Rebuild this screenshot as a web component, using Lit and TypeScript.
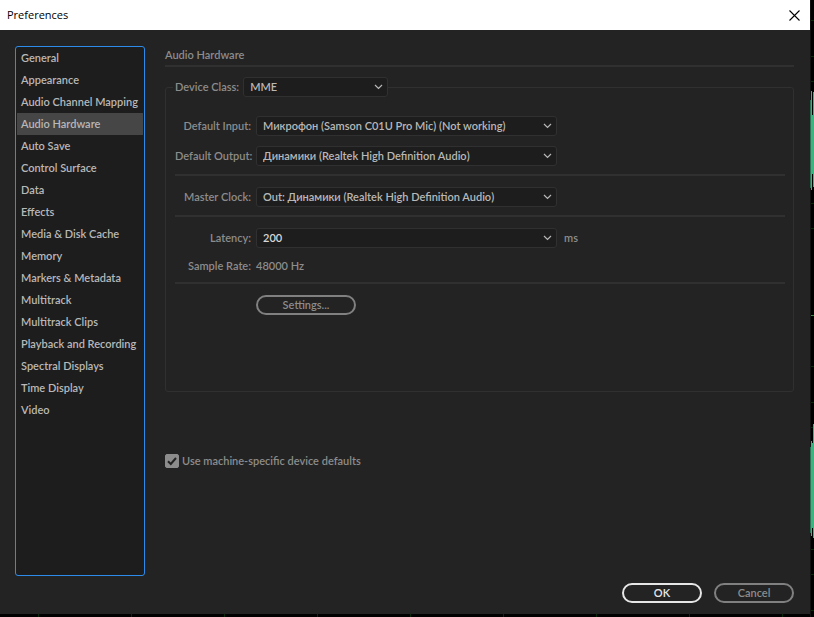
import { LitElement, html, css, svg } from "lit";
import { customElement, property, state } from "lit/decorators.js";
import { classMap } from "lit/directives/class-map.js";

const PAGES = [
  "General", "Appearance", "Audio Channel Mapping", "Audio Hardware", "Auto Save",
  "Control Surface", "Data", "Effects", "Media & Disk Cache", "Memory",
  "Markers & Metadata", "Multitrack", "Multitrack Clips", "Playback and Recording",
  "Spectral Displays", "Time Display", "Video",
];

const chevron = html`<svg class="chevron" width="9" height="6" viewBox="0 0 9 6" aria-hidden="true">
  <path d="M1 1 L4.5 4.5 L8 1" fill="none" stroke="currentColor" stroke-width="1.2" /></svg>`;

/* Slice of the track editor that shows behind the dialog. */
@customElement("editor-edge")
class EditorEdge extends LitElement {
  static styles = css`
    :host { display: block; width: 4px; height: 617px; }
    svg { display: block; }
  `;
  render() {
    const lines = [20, 56, 81, 203, 228, 366, 402, 427, 549, 574, 610];
    return html`<svg width="4" height="617" viewBox="0 0 4 617" aria-hidden="true" shape-rendering="crispEdges">
      ${lines.map((y) => svg`<rect x="0" y=${y} width="4" height="1" fill="#062c0a" />`)}
      <rect x="0" y="315" width="4" height="1" fill="#3f8a45" />
      <g fill="#3cb480">
        <rect x="1" y="91" width="1" height="99" /><rect x="2" y="115" width="1" height="59" /><rect x="3" y="92" width="1" height="95" />
        <rect x="1" y="441" width="1" height="95" /><rect x="2" y="443" width="1" height="85" /><rect x="3" y="424" width="1" height="114" />
      </g>
      <rect x="0" y="0" width="1" height="617" fill="#111" />
      <rect x="0" y="100" width="1" height="88" fill="#2b7355" />
      <rect x="0" y="447" width="1" height="86" fill="#2b7355" />
    </svg>`;
  }
}

@customElement("app-root")
class AppRoot extends LitElement {
  @property() page = "Audio Hardware";
  @state() private machineDefaults = true;

  static styles = css`
    * { box-sizing: border-box; }
    :host {
      display: grid;
      grid-template-columns: 1fr 4px;
      height: 100vh;
      min-height: 480px;
      overflow: hidden;
      background: #000;
      color: #8c8c8c;
      font: 600 11px/16px Lato, "Noto Sans", sans-serif;
    }
    button, input, select { font: inherit; color: inherit; margin: 0; }
    .column { display: flex; flex-direction: column; min-width: 0; }
    .ruler {
      height: 3px;
      background: repeating-linear-gradient(90deg, transparent 0 38px, #062c0a 38px 39px, transparent 39px 93px);
    }
    .dialog { flex: 1; display: flex; flex-direction: column; background: #232323; }
    .titlebar {
      height: 30px;
      padding: 0 10px 0 7px;
      display: flex;
      align-items: center;
      justify-content: space-between;
      background: #fff;
      color: #000;
    }
    .title { margin: 0; font: 400 11px/16px "Open Sans", sans-serif; }
    .close { display: flex; padding: 0; border: 0; background: none; }
    .body { flex: 1; display: flex; gap: 20px; padding: 16px 16px 11px 15px; }
    .pages {
      width: 130px;
      flex: none;
      margin: 0 0 27px;
      padding: 0 1px;
      list-style: none;
      border: 1px solid #2d8ceb;
      border-radius: 3px;
      background: #1d1d1d;
    }
    .page {
      display: block;
      width: 100%;
      height: 22px;
      padding: 0 4px;
      border: 0;
      background: none;
      color: #b8b8b8;
      text-align: left;
      white-space: nowrap;
    }
    .page.selected { background: #464646; }
    .panel { flex: 1; min-width: 0; display: flex; flex-direction: column; }
    .heading { margin: 0; padding: 1px 0 2px; font: inherit; border-bottom: 2px solid #303030; }
    .device {
      min-width: 0;
      height: 315px;
      margin: 10px 0 0;
      padding: 0 8px 0 7px;
      border: 1px solid #303030;
      border-radius: 3px;
    }
    .legend { display: flex; align-items: center; gap: 4px; padding: 0 0 0 2px; }
    .device-class { width: 145px; }
    .rows { display: flex; flex-direction: column; gap: 10px; margin: 19px 0 0 2px; }
    .row { display: grid; grid-template-columns: 76px 301px auto; column-gap: 5px; align-items: center; }
    .row > label, .row > .term { text-align: right; white-space: nowrap; }
    .unit { padding-left: 2px; }
    .rule { height: 2px; margin: -2px 0 1px; border: 0; background: #303030; }
    .settings { grid-column: 2; width: 100px; }
    .field { display: grid; align-items: center; height: 20px; }
    .field > * { grid-area: 1 / 1; }
    .control {
      appearance: none;
      width: 100%;
      height: 20px;
      padding: 0 24px 0 6px;
      border: 1px solid #303030;
      border-radius: 3px;
      background: #1d1d1d;
      color: #b8b8b8;
      outline: none;
    }
    .editable { padding-bottom: 2px; color: #d8d8d8; }
    .chevron { justify-self: end; margin-right: 5px; color: #b8b8b8; pointer-events: none; }
    .defaults { display: flex; align-items: center; gap: 3px; margin-top: 61px; }
    .tick { display: grid; width: 14px; height: 14px; }
    .tick > * { grid-area: 1 / 1; }
    .tick input { appearance: none; width: 14px; height: 14px; border: 1px solid #8c8c8c; border-radius: 2px; }
    .tick input:checked { background: #8c8c8c; }
    .tick svg { visibility: hidden; pointer-events: none; z-index: 1; }
    .tick input:checked + svg { visibility: visible; }
    .actions { display: flex; justify-content: flex-end; gap: 12px; margin-top: auto; }
    .pill {
      height: 20px;
      padding: 0;
      border: 2px solid #808080;
      border-radius: 10px;
      background: none;
      line-height: 16px;
    }
    .actions .pill { width: 80px; }
    .primary { border-color: #e6e6e6; color: #e6e6e6; }
  `;

  private select(id: string, value: string) {
    return html`<span class="field"><select class="control" id=${id}><option>${value}</option></select>${chevron}</span>`;
  }

  render() {
    return html`
      <div class="column">
        <main class="dialog">
          <header class="titlebar">
            <h1 class="title">Preferences</h1>
            <button class="close" aria-label="Close">
              <svg width="11" height="11" viewBox="0 0 11 11"><path d="M.5 .5 L10.5 10.5 M10.5 .5 L.5 10.5" stroke="#000" stroke-width="1.1" /></svg>
            </button>
          </header>
          <div class="body">
            <ul class="pages">
              ${PAGES.map((p) => html`<li><button
                class=${classMap({ page: true, selected: p === this.page })}
                @click=${() => (this.page = p)}>${p}</button></li>`)}
            </ul>
            <section class="panel">
              <h2 class="heading">${this.page}</h2>
              <fieldset class="device">
                <legend class="legend">
                  <label for="class">Device Class:</label>
                  <span class="device-class">${this.select("class", "MME")}</span>
                </legend>
                <div class="rows">
                  <div class="row"><label for="input">Default Input:</label>${this.select("input", "Микрофон (Samson C01U Pro Mic) (Not working)")}</div>
                  <div class="row"><label for="output">Default Output:</label>${this.select("output", "Динамики (Realtek High Definition Audio)")}</div>
                  <hr class="rule" />
                  <div class="row"><label for="clock">Master Clock:</label>${this.select("clock", "Out: Динамики (Realtek High Definition Audio)")}</div>
                  <hr class="rule" />
                  <div class="row">
                    <label for="latency">Latency:</label>
                    <span class="field"><input class="control editable" id="latency" type="text" value="200" />${chevron}</span>
                    <span class="unit">ms</span>
                  </div>
                  <div class="row"><span class="term">Sample Rate:</span><span>48000 Hz</span></div>
                  <hr class="rule" />
                  <div class="row"><button class="pill settings">Settings...</button></div>
                </div>
              </fieldset>
              <div class="defaults">
                <span class="tick">
                  <input id="defaults" type="checkbox" .checked=${this.machineDefaults}
                    @change=${(e: Event) => (this.machineDefaults = (e.target as HTMLInputElement).checked)} />
                  <svg width="14" height="14" viewBox="0 0 14 14"><path d="M3 7.2 L5.8 10 L11 4" fill="none" stroke="#232323" stroke-width="2" /></svg>
                </span>
                <label for="defaults">Use machine-specific device defaults</label>
              </div>
              <footer class="actions">
                <button class="pill primary">OK</button>
                <button class="pill">Cancel</button>
              </footer>
            </section>
          </div>
        </main>
        <div class="ruler"></div>
      </div>
      <editor-edge></editor-edge>
    `;
  }
}
